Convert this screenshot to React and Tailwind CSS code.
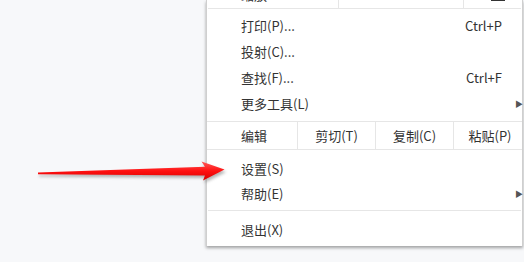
import React from 'react'

const FONT = { fontFamily: '"Noto Sans CJK SC", "Liberation Sans", sans-serif' }

const Item = ({ label, shortcut, sub, h = 'h-[26px]' }) => (
  <div className={`flex items-center ${h} pl-[34px] pr-0 text-[13px] text-[#333]`}>
    <span className="flex-1">{label}</span>
    {shortcut && <span className="mr-[20px]">{shortcut}</span>}
    {sub && <span className="text-[8px] text-[#555] leading-none -mr-[1px]">▶</span>}
  </div>
)

const Sep = () => <div className="h-px bg-[#e6e6e6] mx-px" />

const Arrow = () => (
  <svg className="absolute left-0 top-0" width="524" height="262" viewBox="0 0 524 262">
    <defs>
      <linearGradient id="red" x1="0" y1="0" x2="0" y2="1">
        <stop offset="0" stopColor="#ff5a5a" />
        <stop offset="0.5" stopColor="#ff1010" />
        <stop offset="1" stopColor="#d80000" />
      </linearGradient>
      <filter id="sh" x="-10%" y="-50%" width="120%" height="200%">
        <feGaussianBlur stdDeviation="1.4" />
      </filter>
    </defs>
    <polygon
      points="39,175 206,169 203,164 226,172 204,183 206,178 39,176.5"
      fill="#777"
      opacity="0.55"
      filter="url(#sh)"
    />
    <polygon
      points="38,172.6 205,166.8 201.5,161.5 224.5,169.5 203,180.5 205,175.4 38,174.2"
      fill="url(#red)"
    />
  </svg>
)

export default function App() {
  return (
    <div className="relative w-[524px] h-[262px] overflow-hidden bg-[#f7f8fa]" style={FONT}>
      <div className="pl-[206px]">
        <div className="w-[317px] bg-white border-l border-r border-[#cfcfcf] shadow-[0_2px_3px_rgba(0,0,0,0.35)]">
          {/* zoom row, mostly scrolled above */}
          <div className="h-[8px] overflow-hidden">
            <div className="flex h-[26px] -mt-[18px] text-[13px] text-[#333]">
              <div className="w-[131px] flex items-center pl-[34px]">缩放</div>
              <div className="w-[126px] border-l border-r border-[#e6e6e6]" />
              <div className="flex-1 flex items-end pl-[27px] pb-[7px]">
                <span className="block w-[14px] h-[2px] border-x-[3px] border-b-[2px] border-[#333]" />
              </div>
            </div>
          </div>
          <Sep />
          <div className="py-[4px]">
            <Item label="打印(P)..." shortcut="Ctrl+P" />
            <Item label="投射(C)..." />
            <Item label="查找(F)..." shortcut="Ctrl+F" />
            <Item label="更多工具(L)" sub />
          </div>
          <div className="flex h-[29px] border-y border-[#e6e6e6] text-[13px] text-[#333]">
            <div className="w-[90px] flex items-center pl-[34px]">编辑</div>
            <div className="w-[78px] flex items-center justify-center border-l border-[#e6e6e6]">剪切(T)</div>
            <div className="w-[78px] flex items-center justify-center border-l border-[#e6e6e6]">复制(C)</div>
            <div className="flex-1 flex items-center justify-center border-l border-[#e6e6e6] pl-[4px]">粘贴(P)</div>
          </div>
          <div className="pt-[6px] pb-[4px]">
            <Item label="设置(S)" h="h-[25px]" />
            <Item label="帮助(E)" sub h="h-[25px]" />
          </div>
          <Sep />
          <div className="pt-[6px] pb-[4px]">
            <Item label="退出(X)" h="h-[25px]" />
          </div>
        </div>
      </div>
      <Arrow />
    </div>
  )
}
